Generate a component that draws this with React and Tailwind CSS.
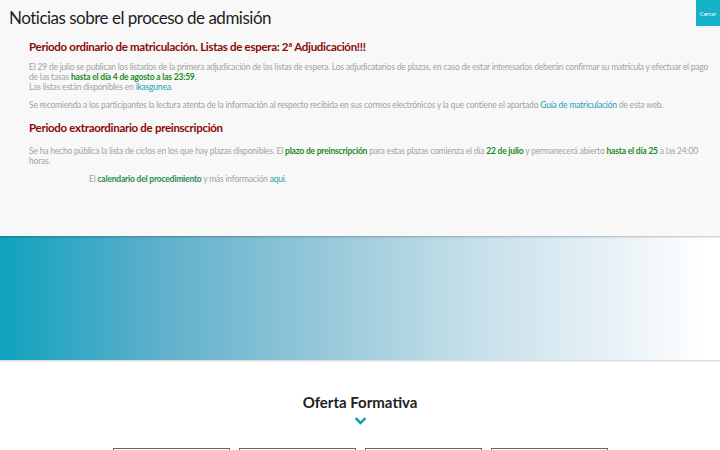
export default function App() {
  return (
    <div className="min-h-screen bg-white font-['Lato',sans-serif] overflow-hidden">
      {/* Noticias panel */}
      <section className="relative h-[236px] bg-[#f8f8f8] shadow-[0_1px_2px_rgba(0,0,0,0.25)] z-10">
        <button className="absolute top-0 right-0 w-[24px] h-[26px] bg-[#14b2c9] text-white text-[6px]">
          Cerrar
        </button>
        <h1 className="pl-[9px] pt-[6px] text-[17px] tracking-[-0.5px] leading-[24px] text-[#1e1e1e]">
          Noticias sobre el proceso de admisión
        </h1>
        <div className="pl-[29px] pr-[8px] text-[8.5px] tracking-[-0.2px] leading-[10px] text-[#a2a2a2]">
          <h2 className="mt-[9px] text-[11.5px] tracking-[-0.3px] leading-[16px] font-bold text-[#8a0a0a]">
            Periodo ordinario de matriculación. Listas de espera: 2ª Adjudicación!!!
          </h2>
          <p className="mt-[7px]">
            El 29 de julio se publican los listados de la primera adjudicación de las listas de espera. Los adjudicatarios de plazas, en caso de estar interesados deberán confirmar su matrícula y efectuar el pago de las tasas{" "}
            <b className="text-[#1d8a1d]">hasta el día 4 de agosto a las 23:59</b>.
            <br />
            Las listas están disponibles en <a className="text-[#1a9db4]">ikasgunea</a>.
          </p>
          <p className="mt-[8px]">
            Se recomienda a los participantes la lectura atenta de la información al respecto recibida en sus correos electrónicos y la que contiene el apartado{" "}
            <a className="text-[#1a9db4]">Guía de matriculación</a> de esta web.
          </p>
          <h2 className="mt-[10px] text-[11.5px] tracking-[-0.3px] leading-[16px] font-bold text-[#8a0a0a]">
            Periodo extraordinario de preinscripción
          </h2>
          <p className="mt-[10px]">
            Se ha hecho pública la lista de ciclos en los que hay plazas disponibles. El{" "}
            <b className="text-[#1d8a1d]">plazo de preinscripción</b> para estas plazas comienza el día{" "}
            <b className="text-[#1d8a1d]">22 de julio</b> y permanecerá abierto{" "}
            <b className="text-[#1d8a1d]">hasta el día 25</b> a las 24:00 horas.
          </p>
          <p className="mt-[8px] pl-[60px]">
            El <b className="text-[#2a8a5a]">calendario del procedimiento</b> y más información{" "}
            <a className="text-[#1a9db4]">aquí</a>.
          </p>
        </div>
      </section>

      {/* Gradient banner */}
      <div className="h-[124px] bg-[linear-gradient(90deg,#10a2bf_0%,#5eb0cb_22%,#97c8da_45%,#c4dfe9_65%,#e8f1f7_85%,#ffffff_98%)] shadow-[0_1px_2px_rgba(0,0,0,0.2)]" />

      {/* Oferta Formativa */}
      <section className="pt-[32px] flex flex-col items-center">
        <h2 className="text-[15px] leading-[20px] font-bold text-[#222]">Oferta Formativa</h2>
        <svg viewBox="0 0 16 10" className="mt-[4px] w-[13px] h-[9px]">
          <path d="M2 2 L8 8 L14 2" fill="none" stroke="#1797b0" strokeWidth="3" />
        </svg>
        <div className="mt-[23px] flex gap-[9px]">
          <div className="w-[117px] h-[20px] border border-[#666]" />
          <div className="w-[117px] h-[20px] border border-[#666]" />
          <div className="w-[117px] h-[20px] border border-[#666]" />
          <div className="w-[117px] h-[20px] border border-[#666]" />
        </div>
      </section>
    </div>
  );
}
